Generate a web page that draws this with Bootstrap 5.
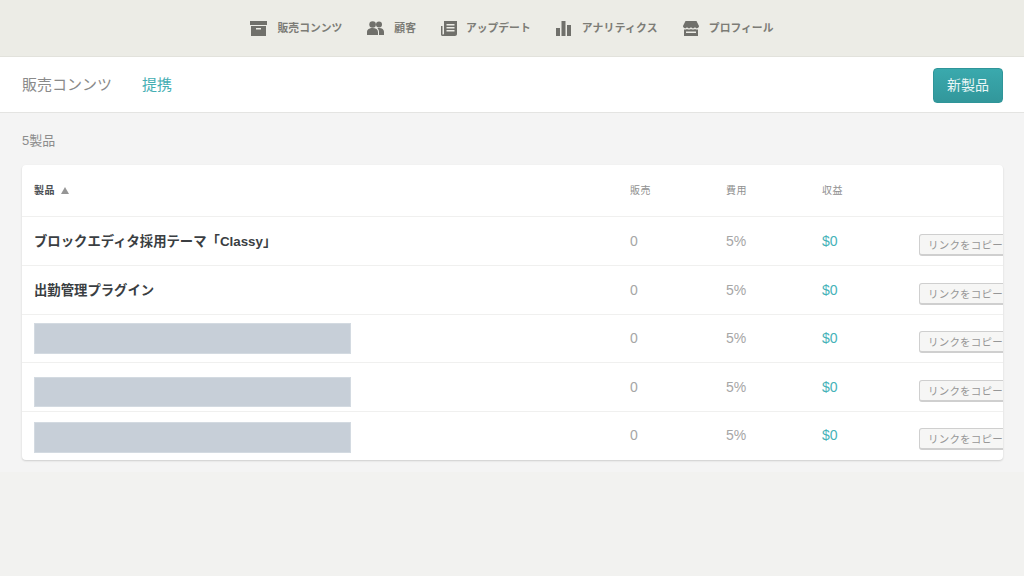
<!DOCTYPE html>
<html lang="ja">
<head>
<meta charset="utf-8">
<title>販売コンテンツ</title>
<link rel="stylesheet" href="https://cdn.jsdelivr.net/npm/bootstrap@5.3.0/dist/css/bootstrap.min.css">
<style>
html,body{height:100%}
body{background:#f2f2f0;font-family:"Liberation Sans","Noto Sans CJK JP",sans-serif;overflow:hidden}
.topbar{height:57px;background:#ecece6;border-bottom:1px solid #e2e2dc;gap:25px;padding-right:1px}
.topitem{color:#7c7c76;font-size:10.8px;font-weight:700;gap:10px;text-decoration:none}
.topitem svg{display:block;fill:#70706b}
.topitem.roomy{gap:11px}
.topitem.snug{gap:9px}
.topitem.wide{letter-spacing:.25px;gap:11px}
.subbar{height:56px;background:#fff;border-bottom:1px solid #e4e4e2;padding:1px 21px 0 22px}
.subtab{font-size:15px;color:#8a8a8a;text-decoration:none;margin-right:30px}
.subtab.on{color:#45aeb3}
.newbtn{width:70px;height:35px;padding:0;font-size:14px;color:#e8f6f6;border:1px solid #2f9599;border-radius:4px;background:linear-gradient(#3aa9ad,#32979b)}
.newbtn:hover{color:#fff}
.mainarea{height:359px;background:#f4f4f4}
.countline{font-size:13px;color:#8c8c8c;padding:20px 0 0 22px;height:52px;line-height:16px}
.tablewrap{margin:0 21px 0 22px;background:#fff;border-radius:4px;box-shadow:0 1px 2px rgba(0,0,0,.16);overflow:hidden}
.prodtable{table-layout:fixed;width:1010px;max-width:none;margin:0;--bs-table-bg:transparent}
.prodtable th,.prodtable td{vertical-align:middle;padding:0;border-bottom:1px solid #f0f0ef;box-shadow:none}
.prodtable tr:last-child td{border-bottom:0}
.prodtable thead th{height:51px;font-size:10px;font-weight:400;color:#909090;letter-spacing:.4px}
.prodtable thead th.namehead{font-weight:700;color:#4c5054;padding-left:12px}
.prodtable tbody td{height:49px;padding-top:2px;font-size:14px;color:#a6a6a6}
.prodtable tbody tr.shortrow td{height:48px}
.prodtable tbody tr.shortrow td:not(.namecell),.prodtable tbody tr:last-child td:not(.namecell){padding-top:0}
.prodtable tbody td.namecell{padding:4px 0 0 12px;font-size:13.35px;font-weight:700;color:#3a3e42}
.prodtable tbody td.money{color:#45b2b8}
.sortmark{display:inline-block;width:0;height:0;margin-left:3px;border-left:4px solid transparent;border-right:4px solid transparent;border-bottom:7px solid #969696}
.redact{display:block;width:317px;height:31px;margin-top:-4px;background:#c7cfd8;border:1px solid #d3dae1}
.redact.lower{margin-top:7px;height:30px}
.redact.low{margin-top:0}
.copybtn{display:block;width:100px;height:22px;padding:0 0 0 8px;font-size:10.5px;letter-spacing:.2px;line-height:20px;text-align:left;white-space:nowrap;color:#979797;background:#f6f6f5;border:1px solid #cfcfcf;border-bottom-width:2px;border-radius:3px;margin-top:7px}
</style>
</head>
<body>
<nav class="topbar d-flex justify-content-center align-items-center">
  <a class="topitem roomy d-flex align-items-center" href="#"><svg width="17" height="15" viewBox="0 0 17 15"><path d="M0 0h17v4H0zM1 5h15v10H1zM6 7v1.500h5V7z" fill-rule="evenodd"/></svg>販売コンンツ</a>
  <a class="topitem d-flex align-items-center" href="#"><svg width="17" height="14" viewBox="0 0 17 14"><circle cx="5.600" cy="3.500" r="3.300"/><circle cx="12" cy="3.500" r="3"/><path d="M0 14v-3c0-2.400 2.200-4 5.600-4s5.400 1.600 5.400 4v3zM12 14v-3c0-1.500-.6-2.800-1.600-3.700.6-.2 1.200-.3 1.800-.3 2.800 0 4.800 1.500 4.800 3.800V14z"/></svg>顧客</a>
  <a class="topitem snug d-flex align-items-center" href="#"><svg width="16" height="15" viewBox="0 0 16 15"><path d="M3 0h13v13c0 1.100-.9 2-2 2H1.500C.7 15 0 14.300 0 13.500V5h1.500v8.500h.5c.6 0 1-.4 1-1zM5.500 3v1.500h8V3zM5.500 6v1.500h8V6zM5.500 9v1.500h8V9z" fill-rule="evenodd"/></svg>アップデート</a>
  <a class="topitem wide d-flex align-items-center" href="#"><svg width="15" height="15" viewBox="0 0 15 15"><path d="M0 7h4v8H0zM5.500 0h4v15h-4zM11 4h4v11h-4z"/></svg>アナリティクス</a>
  <a class="topitem d-flex align-items-center" href="#"><svg width="16" height="15" viewBox="0 0 16 15"><path d="M2.500 0h11L16 5c0 1.300-1 2.200-2 2.200s-1.600-.6-2-1.300c-.4.700-1.100 1.300-2 1.300S8.400 6.600 8 5.900c-.4.700-1.100 1.300-2 1.300s-1.600-.6-2-1.300c-.4.700-1 1.300-2 1.300S0 6.300 0 5zM1 8.400c.9.300 2 .2 3-.5 1.200.8 2.800.8 4 0 1.200.8 2.800.8 4 0 1 .7 2.100.8 3 .5V15H1zM3 10.500v1.500h10v-1.500z" fill-rule="evenodd"/></svg>プロフィール</a>
</nav>
<div class="subbar d-flex align-items-center justify-content-between">
  <div class="d-flex align-items-center">
    <a class="subtab" href="#">販売コンンツ</a>
    <a class="subtab on" href="#">提携</a>
  </div>
  <button class="btn newbtn" type="button">新製品</button>
</div>
<div class="mainarea">
<div class="countline">5製品</div>
<div class="tablewrap">
  <table class="table prodtable">
    <colgroup><col style="width:608px"><col style="width:96px"><col style="width:96px"><col style="width:97px"><col></colgroup>
    <thead>
      <tr><th class="namehead">製品 <span class="sortmark"></span></th><th>販売</th><th>費用</th><th>収益</th><th></th></tr>
    </thead>
    <tbody>
      <tr><td class="namecell">ブロックエディタ採用テーマ「Classy」</td><td>0</td><td>5%</td><td class="money">$0</td><td><button class="copybtn" type="button">リンクをコピー</button></td></tr>
      <tr><td class="namecell">出勤管理プラグイン</td><td>0</td><td>5%</td><td class="money">$0</td><td><button class="copybtn" type="button">リンクをコピー</button></td></tr>
      <tr class="shortrow"><td class="namecell"><span class="redact"></span></td><td>0</td><td>5%</td><td class="money">$0</td><td><button class="copybtn" type="button">リンクをコピー</button></td></tr>
      <tr><td class="namecell"><span class="redact lower"></span></td><td>0</td><td>5%</td><td class="money">$0</td><td><button class="copybtn" type="button">リンクをコピー</button></td></tr>
      <tr><td class="namecell"><span class="redact low"></span></td><td>0</td><td>5%</td><td class="money">$0</td><td><button class="copybtn" type="button">リンクをコピー</button></td></tr>
    </tbody>
  </table>
</div>
</div>
<script src="https://cdn.jsdelivr.net/npm/bootstrap@5.3.0/dist/js/bootstrap.bundle.min.js"></script>
</body>
</html>
